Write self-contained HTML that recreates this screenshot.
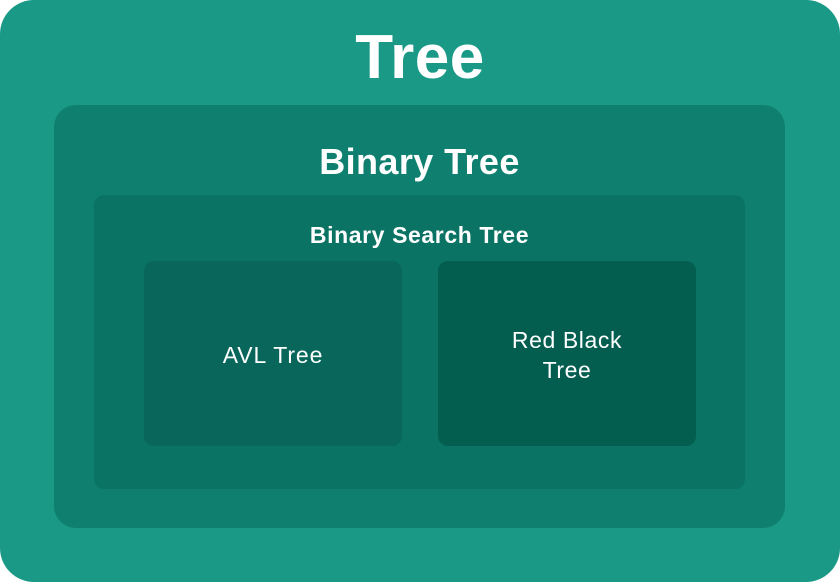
<!DOCTYPE html>
<html><head><style>
body{margin:0;width:840px;height:582px;background:#fff;font-family:"Liberation Sans",sans-serif;color:#fff;}
.b{position:absolute;box-sizing:border-box;}
.t{position:absolute;left:0;right:0;text-align:center;font-weight:bold;}
</style></head><body>
<div class="b" style="left:0;top:0;width:840px;height:582px;background:#1a9987;border-radius:34px;">
<div class="t" style="top:24px;font-size:62px;line-height:68px;letter-spacing:0.5px;">Tree</div>
</div>
<div class="b" style="left:54px;top:105px;width:731px;height:423px;background:#0f806f;border-radius:22px;">
<div class="t" style="top:37px;font-size:36px;line-height:40px;letter-spacing:0.4px;">Binary Tree</div>
</div>
<div class="b" style="left:94px;top:195px;width:651px;height:294px;background:#0b7363;border-radius:10px;">
<div class="t" style="top:26px;font-size:23px;line-height:28px;letter-spacing:0.6px;">Binary Search Tree</div>
</div>
<div class="b" style="left:144px;top:261px;width:258px;height:185px;background:#08675a;border-radius:10px;display:flex;align-items:center;justify-content:center;font-size:23px;text-align:center;line-height:30px;letter-spacing:0.9px;padding-top:2px;">AVL Tree</div>
<div class="b" style="left:438px;top:261px;width:258px;height:185px;background:#035e50;border-radius:10px;display:flex;align-items:center;justify-content:center;font-size:23px;text-align:center;line-height:30px;letter-spacing:0.6px;padding-top:2px;">Red Black<br>Tree</div>
</body></html>
